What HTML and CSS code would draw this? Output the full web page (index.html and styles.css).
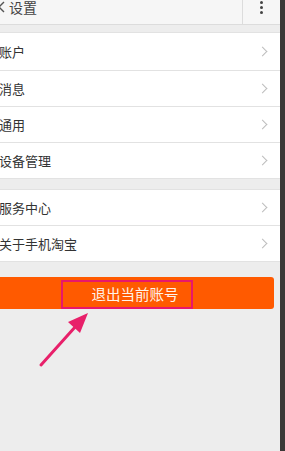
FILE: index.html
```html
<!DOCTYPE html>
<html lang="zh">
<head>
<meta charset="utf-8">
<link rel="stylesheet" href="styles.css">
</head>
<body>
<div class="screen">
  <div class="page">
    <header class="topbar">
      <div class="back">
        <svg class="back-icon" width="6" height="12" viewBox="0 0 6 12"><path d="M5 1 L0 6 L5 11" fill="none" stroke="#555" stroke-width="1.4"/></svg>
        <span class="title">设置</span>
      </div>
      <div class="more">
        <span class="dot"></span><span class="dot"></span><span class="dot"></span>
      </div>
    </header>

    <ul class="group first">
      <li class="row"><span>账户</span><i class="chev"></i></li>
      <li class="row"><span>消息</span><i class="chev"></i></li>
      <li class="row"><span>通用</span><i class="chev"></i></li>
      <li class="row"><span>设备管理</span><i class="chev"></i></li>
    </ul>

    <ul class="group">
      <li class="row"><span>服务中心</span><i class="chev"></i></li>
      <li class="row"><span>关于手机淘宝</span><i class="chev"></i></li>
    </ul>

    <button class="logout">退出当前账号</button>
  </div>
  <div class="edge"></div>

  <div class="highlight"></div>
  <svg class="arrow" width="60" height="60" viewBox="0 0 60 60">
    <line x1="3" y1="55" x2="38" y2="16" stroke="#e8206a" stroke-width="3" stroke-linecap="round"/>
    <polygon points="50,3 30,12 42,23" fill="#e8206a"/>
  </svg>
</div>
</body>
</html>
```

FILE: styles.css
```css
* { box-sizing: border-box; }
html, body {
  margin: 0;
  padding: 0;
  background: #ededed;
}
body {
  font-family: "Noto Sans CJK SC", "Noto Sans", sans-serif;
  color: #333;
}
.screen {
  position: relative;
  display: flex;
  width: 285px;
  height: 451px;
  overflow: hidden;
}
.page {
  width: 280px;
  flex: none;
  background: #ededed;
}
.edge {
  flex: 1;
  background: #3b3836;
}
.topbar {
  height: 25px;
  background: #f6f6f6;
  border-bottom: 1px solid #dcdcdc;
  display: flex;
  justify-content: space-between;
}
.back {
  display: flex;
  align-items: flex-start;
}
.back-icon {
  margin-left: -1px;
  margin-top: 1px;
}
.title {
  margin-left: 4px;
  font-size: 14px;
  line-height: 15px;
  color: #444;
}
.more {
  width: 38px;
  border-left: 1px solid #dcdcdc;
  display: flex;
  flex-direction: column;
  align-items: center;
  gap: 2px;
  padding-top: 1px;
}
.dot {
  width: 3px;
  height: 3px;
  border-radius: 50%;
  background: #444;
}
.group {
  list-style: none;
  margin: 7px 0 0;
  padding: 0;
  background: #fff;
  border-top: 1px solid #e2e2e2;
}
.group + .group {
  margin-top: 10px;
}
.row {
  height: 36px;
  display: flex;
  align-items: center;
  justify-content: space-between;
  border-bottom: 1px solid #e2e2e2;
  font-size: 13px;
  padding: 0 13px 0 0;
}
.group.first .row:first-child {
  height: 38px;
}
.row span {
  margin-left: -1px;
}
.chev {
  width: 7px;
  height: 7px;
  border-top: 1.2px solid #bdbdbd;
  border-right: 1.2px solid #bdbdbd;
  transform: rotate(45deg);
  margin-right: 1px;
}
.logout {
  display: block;
  margin: 15px 0 0 -4px;
  width: 278px;
  height: 32px;
  border: none;
  border-radius: 3px;
  background: #ff5a00;
  color: #fff3ea;
  font-family: "Noto Sans CJK SC", sans-serif;
  font-size: 14.5px;
  padding: 0;
}
.highlight {
  position: absolute;
  left: 61px;
  top: 280px;
  width: 132px;
  height: 29px;
  border: 2px solid #e8186a;
}
.arrow {
  position: absolute;
  left: 38px;
  top: 310px;
}
```
